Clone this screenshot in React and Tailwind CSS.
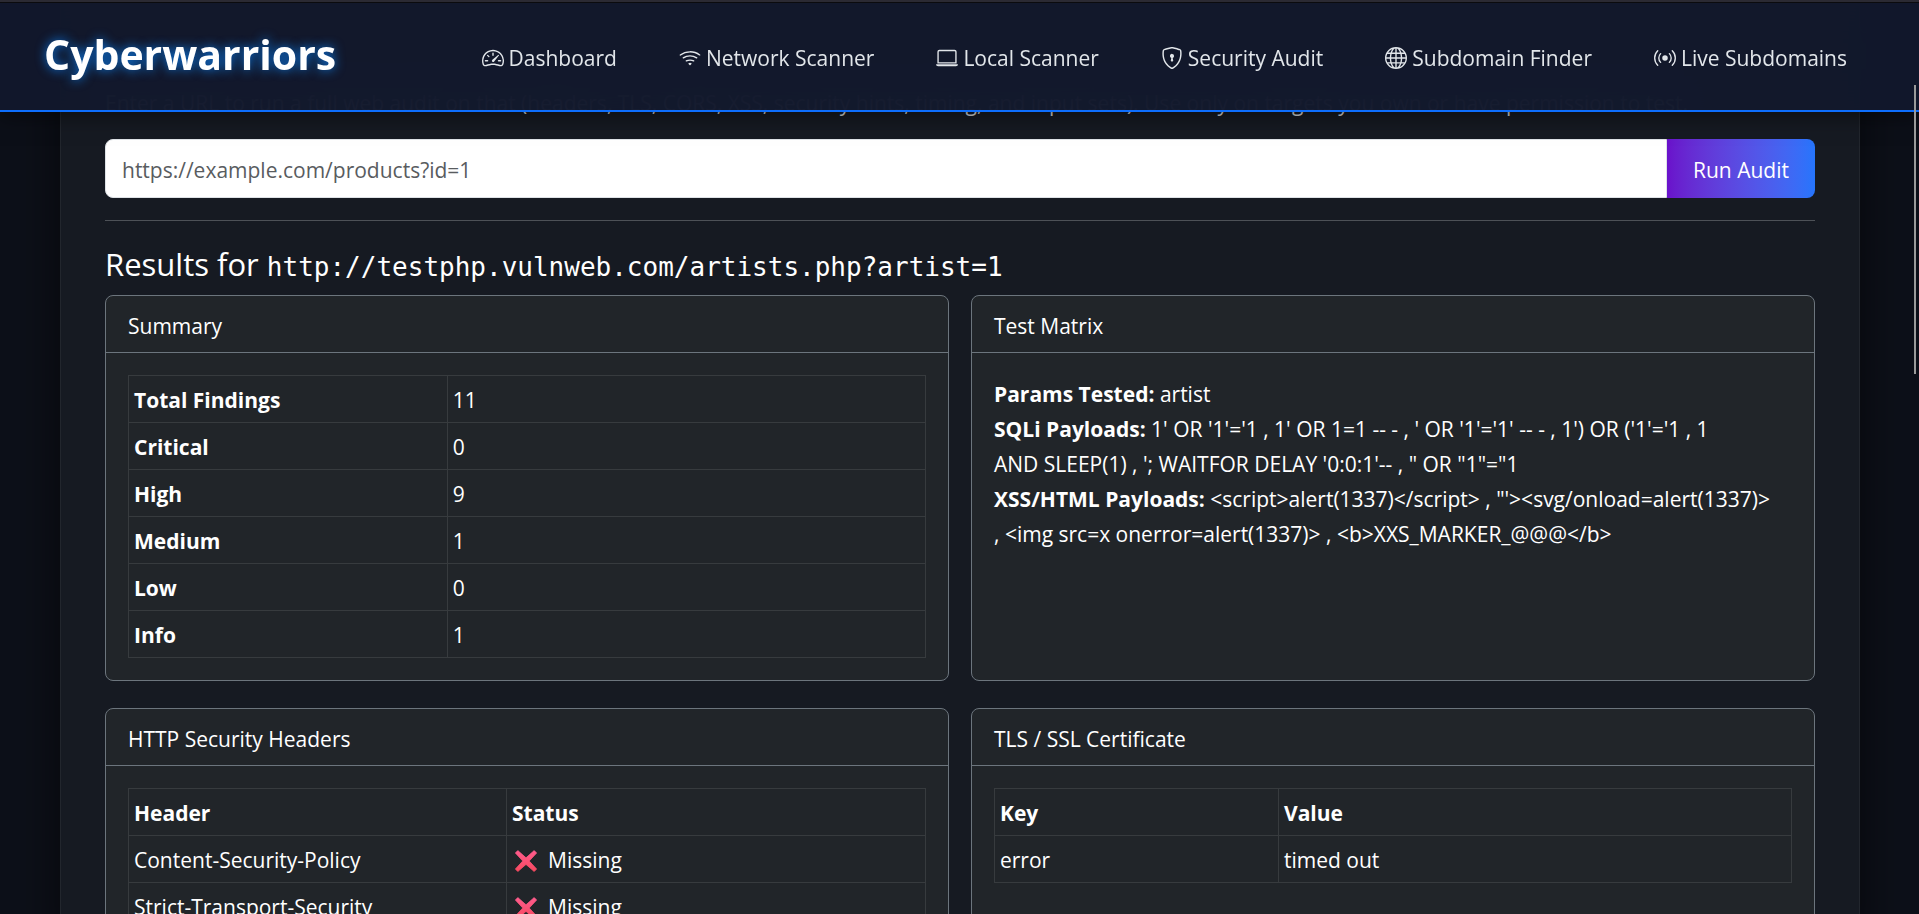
import React from "react";
import {
  BsSpeedometer2,
  BsWifi,
  BsLaptop,
  BsShieldLock,
  BsGlobe,
  BsBroadcast,
} from "react-icons/bs";

const links = [
  { label: "Dashboard", Icon: BsSpeedometer2 },
  { label: "Network Scanner", Icon: BsWifi },
  { label: "Local Scanner", Icon: BsLaptop },
  { label: "Security Audit", Icon: BsShieldLock },
  { label: "Subdomain Finder", Icon: BsGlobe },
  { label: "Live Subdomains", Icon: BsBroadcast },
];

const summary = [
  ["Total Findings", "11"],
  ["Critical", "0"],
  ["High", "9"],
  ["Medium", "1"],
  ["Low", "0"],
  ["Info", "1"],
];

const headers = ["Content-Security-Policy", "Strict-Transport-Security"];

const cell = "h-[47px] border border-[#373b3e] px-[5px] pt-[3px] pb-0 text-left";

function Cross() {
  return (
    <svg viewBox="0 0 22 22" className="h-[22px] w-[22px] shrink-0" aria-hidden="true">
      <defs>
        <linearGradient id="cross" x1="0" y1="0" x2="0" y2="1">
          <stop offset="0" stopColor="#ff5c8d" />
          <stop offset="1" stopColor="#f8495f" />
        </linearGradient>
      </defs>
      <path
        d="M2.8 0.6 L11 7.8 L19.2 0.6 L21.6 3 L14.2 11 L21.6 19 L19.2 21.5 L11 14.4 L2.8 21.5 L0.4 19 L7.8 11 L0.4 3 Z"
        fill="url(#cross)"
        stroke="url(#cross)"
        strokeWidth="0.8"
        strokeLinejoin="round"
      />
    </svg>
  );
}

function Card({ title, children }) {
  return (
    <section className="rounded-lg border border-[#6c757d] bg-[#212529]">
      <h3 className="flex h-[57px] items-center border-b border-[#6c757d] px-[22px] pt-1">{title}</h3>
      <div className="p-[22px]">{children}</div>
    </section>
  );
}

export default function App() {
  return (
    <div className="relative h-screen overflow-hidden bg-[#0d1019] font-['Open_Sans','Noto_Sans',sans-serif] text-[21px] leading-[35px] text-white">
      <nav className="absolute inset-x-0 top-0 z-20 flex h-28 items-center justify-between border-t-2 border-b-2 border-t-[#2b2a33] border-b-[#0d6efd] bg-[#12182c]/95 pr-[72px] pl-11 shadow-[0_4px_20px_rgba(0,0,0,0.5),inset_0_1px_0_#0b0b0e] backdrop-blur-xl">
        <a
          href="#home"
          className="pb-1 text-[41px] leading-[64px] font-bold text-white [text-shadow:0_0_11px_#0d7be8]"
        >
          Cyberwarriors
        </a>
        <ul className="flex items-center gap-[62px] pt-1">
          {links.map(({ label, Icon }) => (
            <li key={label}>
              <a href="#section" className="flex items-center gap-[5px] whitespace-nowrap text-[#e2e6ea]">
                <Icon className="h-[22px] w-[22px]" aria-hidden="true" />
                {label}
              </a>
            </li>
          ))}
        </ul>
      </nav>

      <main className="mr-[59px] ml-[60px] border-x border-[#22262d] bg-[#161a22] px-11 pt-[86px] shadow-[0_0_44px_rgba(0,0,0,0.6)]">
        <p className="mb-[18px] whitespace-nowrap text-[#d5d8dc]">
          Enter a URL to run a full web audit on that (headers, TLS, CORS, XSS, security hints, timing, and
          input sets). Use only on targets you own or have permission to test.
        </p>

        <form className="flex h-[59px]" onSubmit={(e) => e.preventDefault()}>
          <input
            type="url"
            aria-label="Target URL"
            placeholder="https://example.com/products?id=1"
            className="min-w-0 flex-1 rounded-l-lg border border-[#dee2e6] bg-white px-4 pt-1 text-[#212529] outline-none placeholder:text-[#595c5f] placeholder:opacity-100"
          />
          <button
            type="submit"
            className="w-[148px] rounded-r-lg bg-linear-to-r from-[#6a11cb] to-[#2575fc] pt-1 whitespace-nowrap text-white"
          >
            Run Audit
          </button>
        </form>

        <hr className="mt-[22px] mb-[23px] border-[#4d5157]" />

        <h2 className="mb-2 text-[31px] leading-10">
          Results for{" "}
          <code className="font-['DejaVu_Sans_Mono',monospace] text-[26px]">
            http://testphp.vulnweb.com/artists.php?artist=1
          </code>
        </h2>

        <div className="grid grid-cols-2 gap-x-[22px] gap-y-[27px]">
          <Card title="Summary">
            <table className="w-full table-fixed border-collapse">
              <tbody>
                {summary.map(([name, count]) => (
                  <tr key={name}>
                    <th scope="row" className={cell + " w-[40%] font-bold"}>{name}</th>
                    <td className={cell}>{count}</td>
                  </tr>
                ))}
              </tbody>
            </table>
          </Card>

          <Card title="Test Matrix">
            <div className="pt-0.5">
              <p>
                <strong>Params Tested:</strong> artist
              </p>
              <p>
                <strong>SQLi Payloads:</strong>
                {" 1' OR '1'='1 , 1' OR 1=1 -- - , ' OR '1'='1' -- - , 1') OR ('1'='1 , 1"}
                <br />
                {"AND SLEEP(1) , '; WAITFOR DELAY '0:0:1'-- , \" OR \"1\"=\"1"}
              </p>
              <p>
                <strong>XSS/HTML Payloads:</strong>
                {" <script>alert(1337)</script> , \"'><svg/onload=alert(1337)>"}
                <br />
                {", <img src=x onerror=alert(1337)> , <b>XXS_MARKER_@@@</b>"}
              </p>
            </div>
          </Card>

          <Card title="HTTP Security Headers">
            <table className="w-full table-fixed border-collapse">
              <thead>
                <tr>
                  <th scope="col" className={cell + " w-[378px] font-bold"}>Header</th>
                  <th scope="col" className={cell + " font-bold"}>Status</th>
                </tr>
              </thead>
              <tbody>
                {headers.map((name) => (
                  <tr key={name}>
                    <td className={cell}>{name}</td>
                    <td className={cell}>
                      <span className="flex items-center gap-[11px] pl-[3px]">
                        <Cross />
                        Missing
                      </span>
                    </td>
                  </tr>
                ))}
              </tbody>
            </table>
          </Card>

          <Card title="TLS / SSL Certificate">
            <table className="w-full table-fixed border-collapse">
              <thead>
                <tr>
                  <th scope="col" className={cell + " w-[284px] font-bold"}>Key</th>
                  <th scope="col" className={cell + " font-bold"}>Value</th>
                </tr>
              </thead>
              <tbody>
                <tr>
                  <td className={cell}>error</td>
                  <td className={cell}>timed out</td>
                </tr>
              </tbody>
            </table>
          </Card>
        </div>
      </main>

      <div className="absolute top-[85px] right-[3px] z-30 h-[289px] w-0.5 bg-[#9a9a9a]" aria-hidden="true" />
    </div>
  );
}
